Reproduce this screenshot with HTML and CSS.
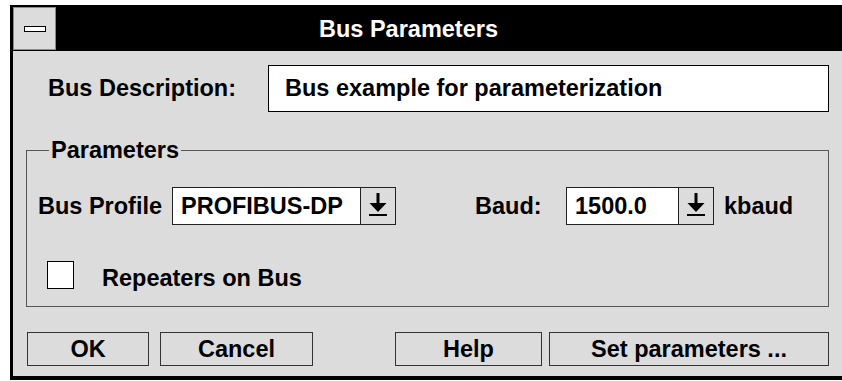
FILE: index.html
```html
<!DOCTYPE html>
<html lang="en">
<head>
    <meta charset="UTF-8">
    <meta name="viewport" content="width=device-width, initial-scale=1.0">
    <title>Bus Parameters</title>
    <link rel="stylesheet" href="styles.css">
</head>
<body>
    <div class="window">
        <div class="titlebar">
            <div class="sysmenu"><span class="sysmenu-bar"></span></div>
            <div class="title">Bus Parameters</div>
        </div>

        <div class="content">
            <div class="desc-row">
                <label class="desc-label" for="busDescription">Bus Description:</label>
                <div class="desc-box" id="busDescription">Bus example for parameterization</div>
            </div>

            <fieldset class="group">
                <legend>Parameters</legend>

                <div class="param-row">
                    <span class="field-label profile-label">Bus Profile</span>
                    <div class="combo combo-profile">
                        <div class="combo-value">PROFIBUS-DP</div>
                        <div class="combo-btn">
                            <svg width="20" height="24" viewBox="0 0 20 24"><rect x="8.5" y="0" width="3" height="11"/><polygon points="1.5,10 18.5,10 10,19"/><rect x="1" y="21" width="18" height="2"/></svg>
                        </div>
                    </div>

                    <span class="field-label baud-label">Baud:</span>
                    <div class="combo combo-baud">
                        <div class="combo-value">1500.0</div>
                        <div class="combo-btn">
                            <svg width="20" height="24" viewBox="0 0 20 24"><rect x="8.5" y="0" width="3" height="11"/><polygon points="1.5,10 18.5,10 10,19"/><rect x="1" y="21" width="18" height="2"/></svg>
                        </div>
                    </div>
                    <span class="unit">kbaud</span>
                </div>

                <div class="check-row">
                    <div class="checkbox"></div>
                    <span class="check-label">Repeaters on Bus</span>
                </div>
            </fieldset>

            <div class="buttons">
                <button class="btn btn-ok">OK</button>
                <button class="btn btn-cancel">Cancel</button>
                <button class="btn btn-help">Help</button>
                <button class="btn btn-set">Set parameters ...</button>
            </div>
        </div>
    </div>
</body>
</html>
```

FILE: styles.css
```css
body {
    font-family: "Liberation Sans", Arial, sans-serif;
    font-weight: bold;
    font-size: 23.5px;
    background-color: #ffffff;
    color: #000;
    margin: 0;
    padding: 5px 0 0 10px;
    overflow: hidden;
}
.window {
    width: 840px;
    border-left: 3px solid #000;
    border-bottom: 4px solid #000;
    background: #dcdcdc;
}
.titlebar {
    display: flex;
    align-items: center;
    height: 46px;
    background: #000;
    box-sizing: border-box;
    padding: 2px 0 1px 0;
}
.sysmenu {
    width: 43px;
    height: 43px;
    box-sizing: border-box;
    background: #dcdcdc;
    border: 1px solid #8a8a8a;
    display: flex;
    align-items: center;
    justify-content: center;
}
.sysmenu-bar {
    display: block;
    width: 22px;
    height: 6px;
    box-sizing: border-box;
    background: #fff;
    border: 1px solid #000;
}
.title {
    color: #fff;
    margin-left: 263px;
    line-height: 26px;
}
.content {
    padding: 14px 0 10px 0;
}
.desc-row {
    display: flex;
    align-items: center;
    height: 47px;
}
.desc-label {
    width: 220px;
    padding-left: 35px;
}
.desc-box {
    width: 561px;
    height: 47px;
    box-sizing: border-box;
    border: 1px solid #000;
    background: #fff;
    padding-left: 16px;
    display: flex;
    align-items: center;
}
.group {
    margin: 26px 0 0 13px;
    width: 803px;
    box-sizing: border-box;
    border: 1px solid #555;
    padding: 0 0 17px 11px;
}
.group legend {
    line-height: 24px;
    margin-left: 11px;
    padding: 0 2px;
}
.param-row {
    display: flex;
    align-items: center;
    margin-top: 25px;
    height: 38px;
}
.profile-label {
    width: 134px;
}
.combo {
    display: flex;
    height: 38px;
    box-sizing: border-box;
    border: 1px solid #222;
    background: #fff;
}
.combo-profile {
    width: 224px;
}
.combo-baud {
    width: 148px;
}
.combo-value {
    flex: 1;
    display: flex;
    align-items: center;
    padding-left: 8px;
}
.combo-btn {
    width: 35px;
    border-left: 1px solid #222;
    background: #dcdcdc;
    display: flex;
    justify-content: center;
    padding-top: 5px;
    box-sizing: border-box;
}
.combo-btn svg {
    fill: #000;
}
.baud-label {
    width: 91px;
    margin-left: 79px;
}
.unit {
    margin-left: 10px;
}
.check-row {
    display: flex;
    align-items: center;
    margin-top: 36px;
    padding-left: 9px;
    height: 28px;
}
.checkbox {
    width: 27px;
    height: 28px;
    box-sizing: border-box;
    border: 1px solid #000;
    background: #fff;
}
.check-label {
    margin-left: 28px;
    padding-top: 6px;
}
.buttons {
    display: flex;
    margin: 25px 0 0 14px;
}
.btn {
    font: inherit;
    color: #000;
    height: 34px;
    padding: 0;
    background: #dcdcdc;
    border: 1px solid #333;
    border-radius: 0;
}
.btn-ok {
    width: 122px;
}
.btn-cancel {
    width: 153px;
    margin-left: 11px;
}
.btn-help {
    width: 147px;
    margin-left: 82px;
}
.btn-set {
    width: 280px;
    margin-left: 7px;
}
```
